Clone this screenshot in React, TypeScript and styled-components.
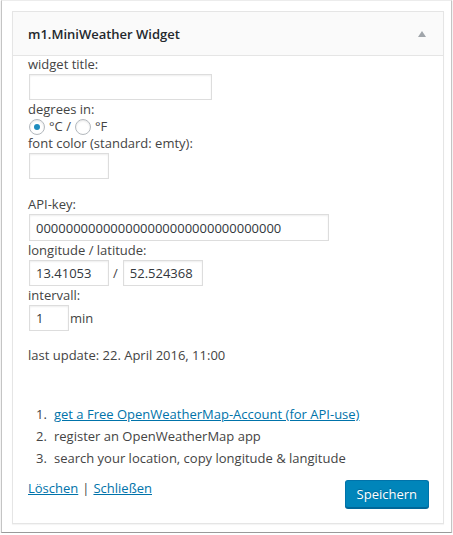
import React from "react";
import styled, { createGlobalStyle } from "styled-components";

const Global = createGlobalStyle`
  html, body { margin: 0; padding: 0; background: #fff; }
  body { font-family: "Open Sans", "Liberation Sans", sans-serif; font-size: 13px; color: #444; }
  * { box-sizing: border-box; }
`;

const Frame = styled.div`
  margin-left: 1px;
  width: 451px;
  height: 533px;
  border-top: 1px solid #ececec;
  border-left: 1px solid #c4c4c4;
  border-right: 1px solid #c4c4c4;
  border-bottom: 1px solid #9a9a9a;
  box-shadow: 0 1px 1px rgba(0, 0, 0, 0.25);
  padding: 10px 0 0 10px;
  background: #fff;
`;

const Widget = styled.div`
  width: 432px;
  height: 513px;
  border: 1px solid #e5e5e5;
  box-shadow: 0 1px 1px rgba(0, 0, 0, 0.04);
  background: #fff;
  display: flex;
  flex-direction: column;
`;

const Header = styled.div`
  height: 44px;
  background: #fafafa;
  border-bottom: 1px solid #e5e5e5;
  display: flex;
  align-items: center;
  justify-content: space-between;
  padding: 0 15px 0 15px;
`;

const Title = styled.h3`
  margin: 0;
  font-size: 13px;
  font-weight: 600;
  color: #23282d;
`;

const Arrow = styled.span`
  width: 0;
  height: 0;
  border-left: 4px solid transparent;
  border-right: 4px solid transparent;
  border-bottom: 6px solid #a0a5aa;
  margin-right: 2px;
  margin-top: 1px;
`;

const Body = styled.div`
  flex: 1;
  display: flex;
  flex-direction: column;
  padding: 0 14px 15px 15px;
`;

const Label = styled.div<{ $top?: number }>`
  line-height: 17px;
  margin-top: ${(p) => p.$top ?? 0}px;
`;

const Input = styled.input<{ $w: number; $h?: number }>`
  display: block;
  width: ${(p) => p.$w}px;
  height: ${(p) => p.$h ?? 26}px;
  margin: 1px 0 1px 1px;
  padding: 0 6px;
  border: 1px solid #ddd;
  box-shadow: inset 0 1px 2px rgba(0, 0, 0, 0.07);
  background: #fff;
  font-family: "Open Sans", "Liberation Sans", sans-serif;
  font-size: 13px;
  color: #32373c;
  outline: none;
`;

const Row = styled.div`
  display: flex;
  align-items: center;
`;

const RadioRow = styled.div`
  display: flex;
  align-items: center;
  height: 17px;
  line-height: 17px;
`;

const Radio = styled.span<{ $on?: boolean; $gap?: number }>`
  width: 16px;
  height: 16px;
  border-radius: 50%;
  border: 1px solid #b4b9be;
  box-shadow: inset 0 1px 2px rgba(0, 0, 0, 0.1);
  background: #fff;
  margin: 0 4px 0 ${(p) => p.$gap ?? 1}px;
  display: flex;
  align-items: center;
  justify-content: center;
  &::after {
    content: "";
    display: ${(p) => (p.$on ? "block" : "none")};
    width: 6px;
    height: 6px;
    border-radius: 50%;
    background: #1e8cbe;
  }
`;

const Sep = styled.span`
  margin: 0 4px;
`;

const Unit = styled.span`
  margin-left: 1px;
  line-height: 17px;
`;

const List = styled.ol`
  list-style: none;
  margin: 39px 0 0 0;
  padding: 0;
`;

const Item = styled.li`
  display: flex;
  line-height: 22px;
  height: 22px;
`;

const Num = styled.span`
  width: 18px;
  margin-left: 8px;
`;

const Link = styled.a`
  color: #0073aa;
  text-decoration: underline;
`;

const Footer = styled.div`
  margin-top: auto;
  display: flex;
  justify-content: space-between;
  align-items: flex-start;
`;

const FooterLinks = styled.div`
  line-height: 17px;
`;

const Pipe = styled.span`
  color: #444;
  margin: 0 4px;
`;

const Button = styled.button`
  height: 28px;
  padding: 0 11px;
  background: #0085ba;
  border: 1px solid #0073aa;
  border-bottom-color: #006799;
  border-radius: 3px;
  box-shadow: 0 1px 0 #006799;
  color: #fff;
  font-family: "Open Sans", "Liberation Sans", sans-serif;
  font-size: 13px;
  line-height: 26px;
  text-shadow: 0 -1px 1px #006799;
`;

export default function App() {
  return (
    <>
      <Global />
      <Frame>
        <Widget>
          <Header>
            <Title>m1.MiniWeather Widget</Title>
            <Arrow />
          </Header>
          <Body>
            <Label>widget title:</Label>
            <Input $w={183} defaultValue="" />
            <Label>degrees in:</Label>
            <RadioRow>
              <Radio $on />
              °C /
              <Radio $gap={4} />
              °F
            </RadioRow>
            <Label>font color (standard: emty):</Label>
            <Input $w={80} defaultValue="" />
            <Label $top={16}>API-key:</Label>
            <Input $w={300} $h={27} defaultValue="000000000000000000000000000000000" />
            <Label>longitude / latitude:</Label>
            <Row>
              <Input $w={80} defaultValue="13.41053" />
              <Sep>/</Sep>
              <Input $w={80} defaultValue="52.524368" />
            </Row>
            <Label>intervall:</Label>
            <Row>
              <Input $w={40} defaultValue="1" />
              <Unit>min</Unit>
            </Row>
            <Label $top={15}>last update: 22. April 2016, 11:00</Label>
            <List>
              <Item>
                <Num>1.</Num>
                <Link href="#">get a Free OpenWeatherMap-Account (for API-use)</Link>
              </Item>
              <Item>
                <Num>2.</Num>
                <span>register an OpenWeatherMap app</span>
              </Item>
              <Item>
                <Num>3.</Num>
                <span>search your location, copy longitude &amp; langitude</span>
              </Item>
            </List>
            <Footer>
              <FooterLinks>
                <Link href="#">Löschen</Link>
                <Pipe>|</Pipe>
                <Link href="#">Schließen</Link>
              </FooterLinks>
              <Button>Speichern</Button>
            </Footer>
          </Body>
        </Widget>
      </Frame>
    </>
  );
}
